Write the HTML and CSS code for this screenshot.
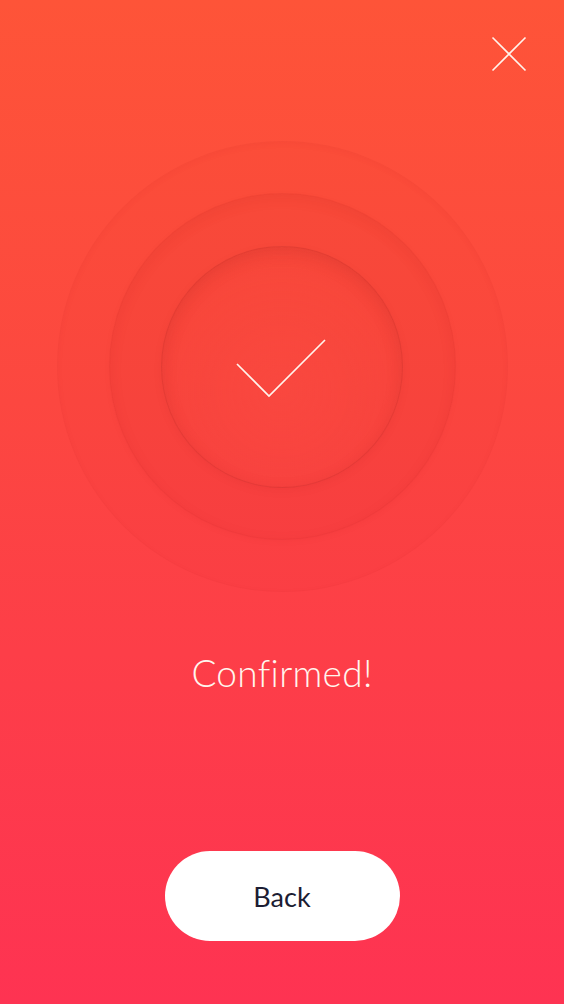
FILE: index.html
```html
<!DOCTYPE html>
<html>
<head>
<meta charset="utf-8">
<link rel="stylesheet" href="styles.css">
</head>
<body>
<div class="screen">
  <div class="topbar">
    <button class="close" aria-label="Close">
      <svg width="36" height="36" viewBox="0 0 36 36"><path d="M1.5 1.5 L34.5 34.5 M34.5 1.5 L1.5 34.5" stroke="#fff4ec" stroke-width="1.6" fill="none"/></svg>
    </button>
  </div>
  <div class="rings">
    <div class="ring ring-outer">
      <div class="ring ring-mid">
        <div class="ring ring-inner">
          <svg class="check" width="92" height="60" viewBox="0 0 92 60"><path d="M2 25 L34 57 L90 1" stroke="#fff4ec" stroke-width="1.7" fill="none"/></svg>
        </div>
      </div>
    </div>
  </div>
  <h1 class="title">Confirmed!</h1>
  <div class="spacer"></div>
  <button class="back">Back</button>
</div>
</body>
</html>
```
FILE: styles.css
```css
html, body {
  margin: 0;
  padding: 0;
}
body {
  width: 564px;
  height: 1004px;
  overflow: hidden;
  font-family: Lato, "Open Sans", sans-serif;
}
.screen {
  width: 564px;
  height: 1004px;
  background: linear-gradient(180deg, #fe5438 0%, #fc4740 40%, #fd3e48 65%, #fe3352 100%);
  display: flex;
  flex-direction: column;
  align-items: center;
}
.topbar {
  align-self: stretch;
  display: flex;
  justify-content: flex-end;
  padding: 36px 37px 0 0;
  height: 36px;
}
.close {
  width: 36px;
  height: 36px;
  padding: 0;
  border: 0;
  background: none;
  display: block;
}
.close svg { display: block; }
.rings {
  margin-top: 69px;
  display: flex;
  justify-content: center;
}
.ring {
  border-radius: 50%;
  display: flex;
  align-items: center;
  justify-content: center;
  box-sizing: border-box;
}
.ring-outer {
  width: 451px;
  height: 451px;
  background: rgba(200, 30, 30, 0.035);
  border: 1px solid rgba(170, 30, 30, 0.05);
  box-shadow: inset 0 2px 6px rgba(150, 20, 20, 0.04);
}
.ring-mid {
  width: 347px;
  height: 347px;
  background: rgba(200, 30, 30, 0.05);
  border: 1px solid rgba(150, 25, 25, 0.08);
  box-shadow: inset 0 4px 14px rgba(150, 20, 20, 0.08), 0 2px 6px rgba(150, 20, 20, 0.04);
}
.ring-inner {
  width: 242px;
  height: 242px;
  background: radial-gradient(circle at 50% 60%, rgba(255, 80, 70, 0.35) 0%, rgba(255, 80, 70, 0.15) 55%, rgba(180, 30, 30, 0.06) 100%);
  border: 1px solid rgba(140, 20, 20, 0.18);
  box-shadow: inset 0 5px 16px rgba(140, 20, 20, 0.14), 0 3px 10px rgba(140, 20, 20, 0.06);
}
.check {
  display: block;
  margin: 4px 2px 0 0;
}
.title {
  margin: 58px 0 0;
  font-family: Lato, "Open Sans", sans-serif;
  font-weight: 300;
  font-size: 37px;
  line-height: 46px;
  color: #fff6ee;
  letter-spacing: 0.3px;
}
.spacer { flex: 1; }
.back {
  width: 235px;
  height: 90px;
  border-radius: 45px;
  border: 0;
  background: #ffffff;
  color: #1c1d33;
  font-family: Lato, "Open Sans", sans-serif;
  font-weight: 400;
  font-size: 27px;
  margin-bottom: 63px;
  padding: 0;
}
```
